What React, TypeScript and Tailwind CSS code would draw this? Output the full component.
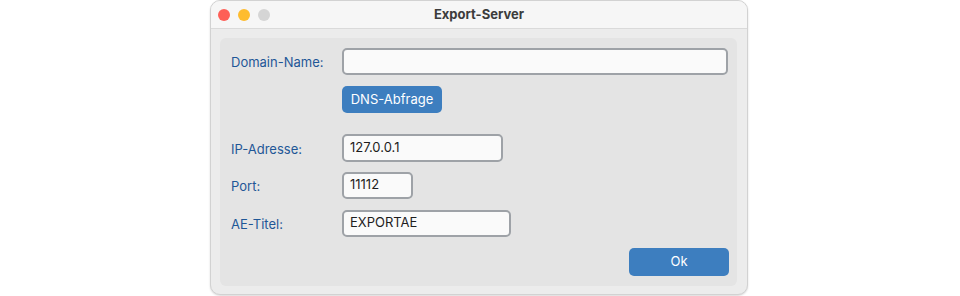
import React from "react";

function Field({ value, width }: { value: string; width: string }) {
  return (
    <div
      className={`${width} flex h-[27px] items-center rounded-[5px] border-2 border-[#9ea2a7] bg-[#fafafa] px-[6px] pb-[1px] text-[13px] text-[#1d1d1d]`}
    >
      {value}
    </div>
  );
}

function Label({ children }: { children: React.ReactNode }) {
  return <span className="w-[111px] pt-[3px] text-[13px] text-[#1f5797]">{children}</span>;
}

export default function App() {
  return (
    <div className="h-[296px] w-[960px] bg-white font-['Inter','Liberation_Sans',sans-serif]">
      <div className="ml-[210px] flex h-[295px] w-[538px] flex-col overflow-hidden rounded-[10px] border border-[#d2d2d2] bg-[#ececec] shadow-[0_1px_2px_rgba(0,0,0,0.15)]">
        {/* title bar */}
        <div className="relative flex h-[28px] shrink-0 items-center border-b border-[#dadada] bg-[#f6f6f6] pl-[7px]">
          <div className="flex gap-[8px]">
            <span className="h-[12px] w-[12px] rounded-full bg-[#fe5f57]" />
            <span className="h-[12px] w-[12px] rounded-full bg-[#febc2e]" />
            <span className="h-[12px] w-[12px] rounded-full bg-[#d5d5d5]" />
          </div>
          <div className="absolute inset-0 flex items-center justify-center text-[13px] font-bold text-[#3c3c3c]">
            Export-Server
          </div>
        </div>

        {/* content */}
        <div className="flex-1 pb-[8px] pl-[9px] pr-[10px] pt-[9px]">
          <div className="flex h-full flex-col rounded-[6px] bg-[#e4e4e4] pl-[11px] pr-[8px] pt-[10px]">
            <div className="flex items-center">
              <Label>Domain-Name:</Label>
              <Field value="" width="w-[386px]" />
            </div>
            <div className="mt-[11px] pl-[111px]">
              <button className="flex h-[27px] w-[100px] items-center justify-center rounded-[5px] bg-[#3d7ebf] text-[13px] text-white">
                DNS-Abfrage
              </button>
            </div>
            <div className="mt-[21px] flex items-center">
              <Label>IP-Adresse:</Label>
              <Field value="127.0.0.1" width="w-[161px] h-[28px]" />
            </div>
            <div className="mt-[10px] flex items-center">
              <Label>Port:</Label>
              <Field value="11112" width="w-[71px]" />
            </div>
            <div className="mt-[11px] flex items-center">
              <Label>AE-Titel:</Label>
              <Field value="EXPORTAE" width="w-[169px]" />
            </div>
            <div className="mt-[11px] flex justify-end">
              <button className="flex h-[28px] w-[100px] items-center justify-center rounded-[5px] bg-[#3d7ebf] text-[13px] text-white">
                Ok
              </button>
            </div>
          </div>
        </div>
      </div>
    </div>
  );
}
